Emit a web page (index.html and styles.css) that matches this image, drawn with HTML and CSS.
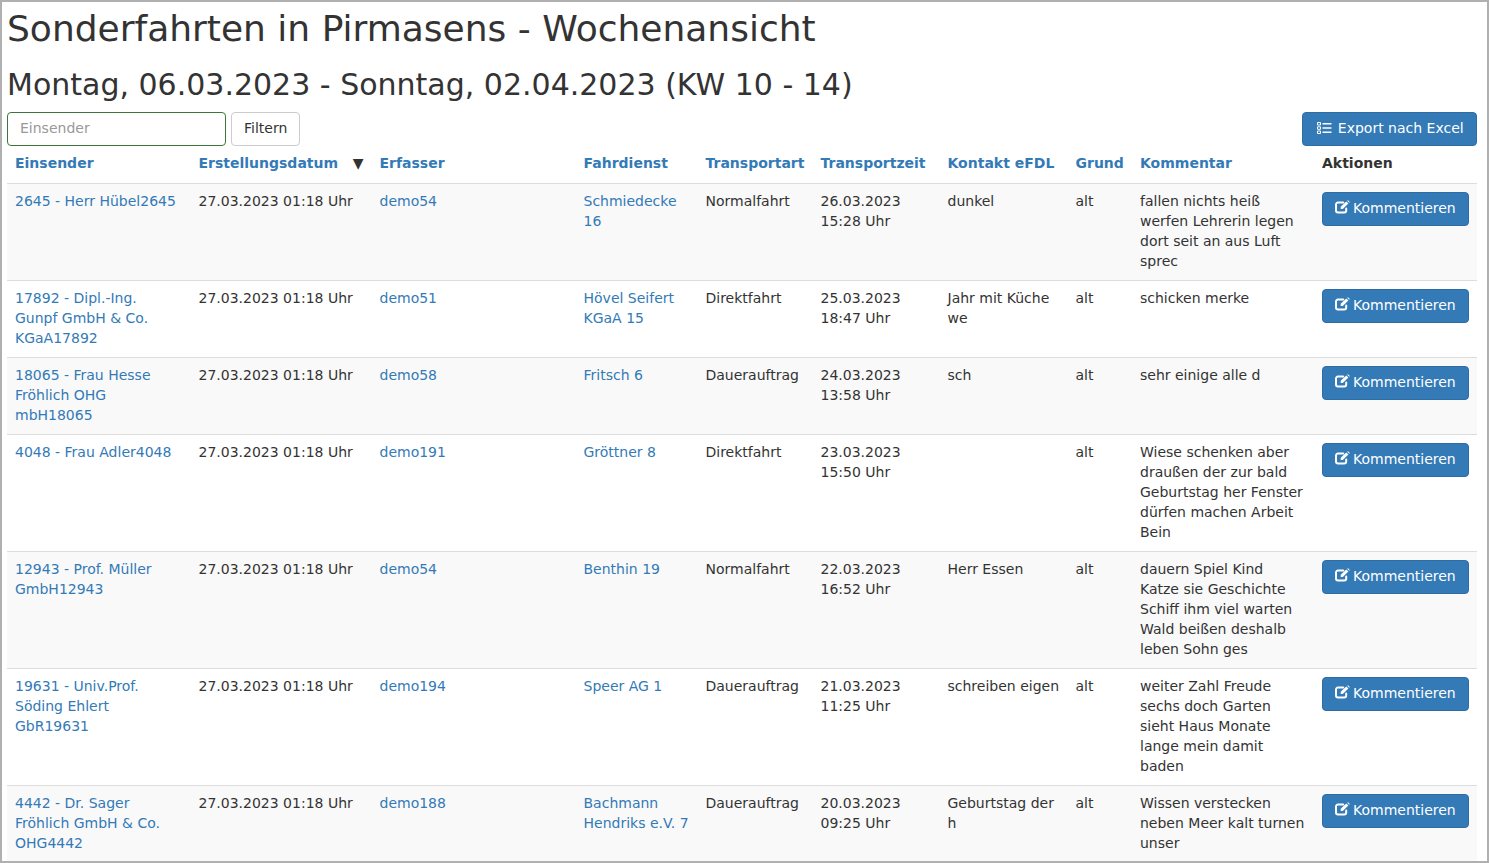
FILE: index.html
```html
<!DOCTYPE html>
<html lang="de">

<head>
  <meta charset="UTF-8">
  <meta name="viewport" content="width=device-width, initial-scale=1.0">
  <title>Sonderfahrten in Pirmasens - Wochenansicht</title>
  <link rel="stylesheet" href="styles.css">
</head>

<body>
  <div class="page">
    <h1>Sonderfahrten in Pirmasens - Wochenansicht</h1>
    <h2>Montag, 06.03.2023 - Sonntag, 02.04.2023 (KW 10 - 14)</h2>

    <div class="toolbar">
      <form class="filter-form">
        <input class="filter-input" type="text" placeholder="Einsender">
        <button class="btn" type="button">Filtern</button>
      </form>
      <button class="btn btn-primary btn-export" type="button">
        <svg class="icon-list" viewBox="0 0 16 14" width="16" height="14">
          <path fill="none" stroke="currentColor" stroke-width="1" d="M1.5 1.5h3v2.5h-3zM1.5 5.8h3v2.5h-3zM1.5 10h3v2.5h-3z" />
          <path fill="currentColor" d="M6.5 2h9v1.5h-9zM6.5 6.2h9v1.5h-9zM6.5 10.5h9V12h-9z" />
        </svg>
        Export nach Excel
      </button>
    </div>

    <table class="report">
      <colgroup>
        <col class="col-einsender">
        <col class="col-datum">
        <col class="col-erfasser">
        <col class="col-fahrdienst">
        <col class="col-art">
        <col class="col-zeit">
        <col class="col-kontakt">
        <col class="col-grund">
        <col class="col-kommentar">
        <col class="col-aktionen">
      </colgroup>
      <thead>
        <tr>
          <th><a href="#">Einsender</a></th>
          <th><span class="sort-arrow">▼</span><a href="#">Erstellungsdatum</a></th>
          <th><a href="#">Erfasser</a></th>
          <th><a href="#">Fahrdienst</a></th>
          <th><a href="#">Transportart</a></th>
          <th><a href="#">Transportzeit</a></th>
          <th><a href="#">Kontakt eFDL</a></th>
          <th><a href="#">Grund</a></th>
          <th><a href="#">Kommentar</a></th>
          <th>Aktionen</th>
        </tr>
      </thead>
      <tbody>
        <tr>
          <td><a href="#">2645 - Herr Hübel2645</a></td>
          <td>27.03.2023 01:18 Uhr</td>
          <td><a href="#">demo54</a></td>
          <td><a href="#">Schmiedecke 16</a></td>
          <td>Normalfahrt</td>
          <td>26.03.2023 15:28 Uhr</td>
          <td>dunkel</td>
          <td>alt</td>
          <td>fallen nichts heiß werfen Lehrerin legen dort seit an aus Luft sprec</td>
          <td><button class="btn btn-primary" type="button"><svg class="icon-edit" viewBox="0.8 0 16 14" width="16" height="14"><use href="#edit" /></svg>Kommentieren</button></td>
        </tr>
        <tr>
          <td><a href="#">17892 - Dipl.-Ing. Gunpf GmbH &amp; Co. KGaA17892</a></td>
          <td>27.03.2023 01:18 Uhr</td>
          <td><a href="#">demo51</a></td>
          <td><a href="#">Hövel Seifert KGaA 15</a></td>
          <td>Direktfahrt</td>
          <td>25.03.2023 18:47 Uhr</td>
          <td>Jahr mit Küche we</td>
          <td>alt</td>
          <td>schicken merke</td>
          <td><button class="btn btn-primary" type="button"><svg class="icon-edit" viewBox="0.8 0 16 14" width="16" height="14"><use href="#edit" /></svg>Kommentieren</button></td>
        </tr>
        <tr>
          <td><a href="#">18065 - Frau Hesse Fröhlich OHG mbH18065</a></td>
          <td>27.03.2023 01:18 Uhr</td>
          <td><a href="#">demo58</a></td>
          <td><a href="#">Fritsch 6</a></td>
          <td>Dauerauftrag</td>
          <td>24.03.2023 13:58 Uhr</td>
          <td>sch</td>
          <td>alt</td>
          <td>sehr einige alle d</td>
          <td><button class="btn btn-primary" type="button"><svg class="icon-edit" viewBox="0.8 0 16 14" width="16" height="14"><use href="#edit" /></svg>Kommentieren</button></td>
        </tr>
        <tr>
          <td><a href="#">4048 - Frau Adler4048</a></td>
          <td>27.03.2023 01:18 Uhr</td>
          <td><a href="#">demo191</a></td>
          <td><a href="#">Gröttner 8</a></td>
          <td>Direktfahrt</td>
          <td>23.03.2023 15:50 Uhr</td>
          <td></td>
          <td>alt</td>
          <td>Wiese schenken aber draußen der zur bald Geburtstag her Fenster dürfen machen Arbeit Bein</td>
          <td><button class="btn btn-primary" type="button"><svg class="icon-edit" viewBox="0.8 0 16 14" width="16" height="14"><use href="#edit" /></svg>Kommentieren</button></td>
        </tr>
        <tr>
          <td><a href="#">12943 - Prof. Müller GmbH12943</a></td>
          <td>27.03.2023 01:18 Uhr</td>
          <td><a href="#">demo54</a></td>
          <td><a href="#">Benthin 19</a></td>
          <td>Normalfahrt</td>
          <td>22.03.2023 16:52 Uhr</td>
          <td>Herr Essen</td>
          <td>alt</td>
          <td>dauern Spiel Kind Katze sie Geschichte Schiff ihm viel warten Wald beißen deshalb leben Sohn ges</td>
          <td><button class="btn btn-primary" type="button"><svg class="icon-edit" viewBox="0.8 0 16 14" width="16" height="14"><use href="#edit" /></svg>Kommentieren</button></td>
        </tr>
        <tr>
          <td><a href="#">19631 - Univ.Prof. Söding Ehlert GbR19631</a></td>
          <td>27.03.2023 01:18 Uhr</td>
          <td><a href="#">demo194</a></td>
          <td><a href="#">Speer AG 1</a></td>
          <td>Dauerauftrag</td>
          <td>21.03.2023 11:25 Uhr</td>
          <td>schreiben eigen</td>
          <td>alt</td>
          <td>weiter Zahl Freude sechs doch Garten sieht Haus Monate lange mein damit baden</td>
          <td><button class="btn btn-primary" type="button"><svg class="icon-edit" viewBox="0.8 0 16 14" width="16" height="14"><use href="#edit" /></svg>Kommentieren</button></td>
        </tr>
        <tr>
          <td><a href="#">4442 - Dr. Sager Fröhlich GmbH &amp; Co. OHG4442</a></td>
          <td>27.03.2023 01:18 Uhr</td>
          <td><a href="#">demo188</a></td>
          <td><a href="#">Bachmann Hendriks e.V. 7</a></td>
          <td>Dauerauftrag</td>
          <td>20.03.2023 09:25 Uhr</td>
          <td>Geburtstag der h</td>
          <td>alt</td>
          <td>Wissen verstecken neben Meer kalt turnen unser</td>
          <td><button class="btn btn-primary" type="button"><svg class="icon-edit" viewBox="0.8 0 16 14" width="16" height="14"><use href="#edit" /></svg>Kommentieren</button></td>
        </tr>
      </tbody>
    </table>
  </div>

  <!-- Icon fuer die Kommentieren-Buttons -->
  <svg class="icon-defs" width="0" height="0">
    <defs>
      <g id="edit">
        <path fill="none" stroke="currentColor" stroke-width="2" stroke-linecap="round" d="M12 8.500v2.100a2 2 0 0 1-2 2H3.800a2 2 0 0 1-2-2V4.500a2 2 0 0 1 2-2H9" />
        <path fill="currentColor" d="M6.500 6.800 12 1.500l2.200 2.100-5.600 5.400H6.500zM13 .8l.8-.6 1.800 1.800-.6.800z" />
      </g>
    </defs>
  </svg>
</body>

</html>
```

FILE: styles.css
```css
* {
  box-sizing: border-box;
}

html,
body {
  margin: 0;
  height: 100%;
}

body {
  font-family: "DejaVu Sans", sans-serif;
  font-size: 14px;
  line-height: 1.42857143;
  color: #333;
  background: #fff;
}

a {
  color: #337ab7;
  text-decoration: none;
}

.page {
  height: 863px;
  padding: 0 10px 0 5px;
  border: 2px solid #b0b0b0;
  overflow: hidden;
}

h1,
h2 {
  font-weight: 400;
  line-height: 1.1;
  margin: 0;
}

h1 {
  font-size: 36px;
  margin-top: 7px;
}

h2 {
  font-size: 30px;
  margin-top: 19px;
}

.toolbar {
  display: flex;
  justify-content: space-between;
  align-items: flex-end;
  margin-top: 11px;
}

.filter-form {
  display: flex;
  gap: 5px;
}

.filter-input {
  width: 219px;
  height: 34px;
  padding: 5px 12px 7px;
  font: inherit;
  color: #555;
  background: #fff;
  border: 1px solid #3c763d;
  border-radius: 4px;
}

.filter-input::placeholder {
  color: #999;
}

.btn {
  display: inline-block;
  height: 34px;
  padding: 5px 12px 7px;
  font: inherit;
  color: #333;
  background: #fff;
  border: 1px solid #ccc;
  border-radius: 4px;
  white-space: nowrap;
}

.btn-primary {
  color: #fff;
  background: #337ab7;
  border-color: #2e6da4;
}

.btn-export {
  width: 175px;
  padding-left: 13px;
}

.icon-list {
  vertical-align: -2px;
  margin-right: 1px;
}

.icon-edit {
  vertical-align: -1px;
  margin-right: 2px;
}

.icon-defs {
  position: absolute;
}

.report {
  width: 1470px;
  table-layout: fixed;
  border-collapse: collapse;
  border-spacing: 0;
}

.col-einsender { width: 183.5px; }
.col-datum { width: 181px; }
.col-erfasser { width: 204px; }
.col-fahrdienst { width: 122px; }
.col-art { width: 115px; }
.col-zeit { width: 127px; }
.col-kontakt { width: 128px; }
.col-grund { width: 64.5px; }
.col-kommentar { width: 182px; }
.col-aktionen { width: 163px; }

.report th,
.report td {
  padding: 7px 8px 9px;
  text-align: left;
  vertical-align: top;
}

.report th {
  font-weight: 700;
  padding-bottom: 10px;
  border-bottom: 1px solid #ddd;
}

.report td {
  border-top: 1px solid #ddd;
}

.report td:last-child {
  padding-top: 8px;
  padding-bottom: 8px;
}

.report tbody tr:first-child td {
  border-top: 0;
}

.report tbody tr:nth-child(odd) {
  background: #f9f9f9;
}

.sort-arrow {
  float: right;
  font-weight: 400;
  color: #333;
}
```
